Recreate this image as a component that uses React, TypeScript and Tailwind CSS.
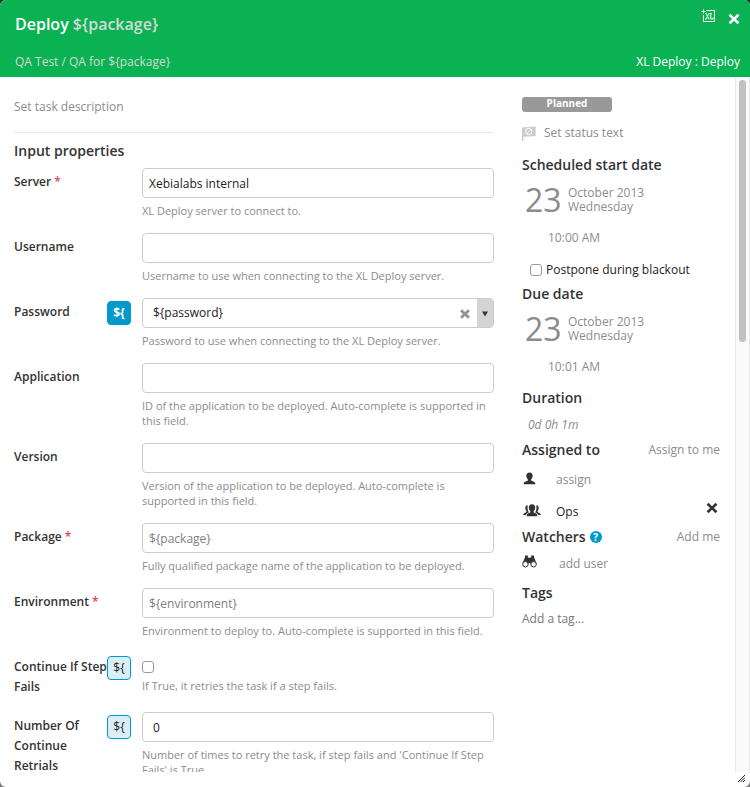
import type { ReactNode } from "react";

const heading = "text-[14px] leading-5 font-semibold text-[#333]";
const muted = "text-[12px] leading-5 text-[#8c8c8c]";
const box =
  "block h-[30px] w-full rounded border border-[#ccc] bg-white text-[12px] text-[#222] placeholder:text-[#808080] outline-none";

function Cross({ size, color, heavy }: { size: number; color: string; heavy?: boolean }) {
  return (
    <svg width={size} height={size} viewBox="0 0 12 12" className="block" aria-hidden="true">
      <path
        d="M2.500.8 6 4.200 9.500.8l1.900 1.900L7.900 6l3.500 3.300-1.900 1.900L6 7.800l-3.500 3.400L.6 9.300 4.100 6 .6 2.700z"
        fill={color}
        stroke={heavy ? color : "none"}
        strokeWidth="1"
      />
    </svg>
  );
}

function VariableToggle({ active, label }: { active?: boolean; label: string }) {
  return (
    <button
      type="button"
      aria-label={`Use variable for ${label}`}
      className={
        active
          ? "block h-6 w-6 rounded border border-[#0099cc] bg-[#0099cc] text-[12px] font-bold text-white"
          : "block h-6 w-6 rounded border border-[#0099cc] bg-[#d9eef7] text-[12px] font-medium text-[#222]"
      }
    >
      {"${"}
    </button>
  );
}

type FieldProps = {
  id: string;
  label: string;
  help: string;
  required?: boolean;
  toggle?: "on" | "off";
  children: ReactNode;
};

function Field({ id, label, help, required, toggle, children }: FieldProps) {
  return (
    <div className="mb-[15px] flex min-h-[44px]">
      <label htmlFor={id} className="w-[93px] shrink-0 pt-1 text-[12px] leading-5 font-semibold text-[#333]">
        {label}
        {required && <span className="text-[#d9434e]"> *</span>}
      </label>
      <div className="w-[35px] shrink-0 pt-[3px]">
        {toggle && <VariableToggle active={toggle === "on"} label={label} />}
      </div>
      <div className="min-w-0 flex-1">
        {children}
        <p className="mt-[5px] text-[11px] leading-[15px] text-[#8c8c8c]">{help}</p>
      </div>
    </div>
  );
}

function DateBlock({ time }: { time: string }) {
  return (
    <>
      <div className="mt-[9px] flex items-center pl-[3px] text-[#8c8c8c]">
        <span className="w-[43px] text-[32px] leading-8 font-medium">23</span>
        <span className="text-[12px] leading-[14px]">
          October 2013
          <br />
          Wednesday
        </span>
      </div>
      <p className={`mt-3 pl-[26px] ${muted}`}>{time}</p>
    </>
  );
}

function FlagIcon() {
  return (
    <svg width="14" height="15" viewBox="0 0 14 15" aria-hidden="true">
      <path d="M0 1.500 6 1l7.600-.6V10L7 10.400l-5.600.3V15H0z" fill="#ccc" />
      <circle cx="6.800" cy="5.500" r="3.200" fill="none" stroke="#fff" strokeWidth="1" />
      <path d="m4.600 7.700 4.400-4.400" stroke="#fff" strokeWidth="1" />
    </svg>
  );
}

function UserIcon() {
  return (
    <svg width="13" height="13" viewBox="0 0 13 13" aria-hidden="true">
      <path
        d="M6.500.4c2.100 0 3.200 1.300 3.200 3.200 0 1.500-.6 2.800-1.500 3.600v1.300c.5.9 4.100 1.100 4.100 2.700v1.100H.7v-1.100c0-1.600 3.600-1.800 4.100-2.700V7.200C3.900 6.400 3.300 5.100 3.300 3.600 3.300 1.700 4.400.4 6.500.4z"
        fill="#333"
      />
    </svg>
  );
}

function GroupIcon() {
  return (
    <svg width="18" height="13" viewBox="0 0 18 13" aria-hidden="true">
      <path
        d="M9 .2c2.100 0 3.200 1.300 3.200 3.200 0 1.500-.6 2.800-1.500 3.600v1.300c.5.9 3.500 1.100 3.500 2.700v1.300H3.800V11c0-1.600 3-1.800 3.500-2.700V7C6.400 6.200 5.800 4.900 5.800 3.400 5.800 1.500 6.900.2 9 .2z"
        fill="#333"
      />
      <path
        d="M4.900 1.300C3.200 1.100 2.300 2.300 2.300 4c0 1.200.4 2.300 1.100 3v1C3 8.800.3 8.900.3 10.300v.8h2.600c.2-1.500 1.700-2 2.700-2.500V7.800C4.600 6.600 4.100 3 4.900 1.300zM13.100 1.300c1.700-.2 2.600 1 2.600 2.700 0 1.200-.4 2.300-1.100 3v1c.4.8 3.100.9 3.100 2.300v.8h-2.600c-.2-1.500-1.700-2-2.700-2.500v-.8c1-1.200 1.500-4.800.7-6.500z"
        fill="#333"
      />
    </svg>
  );
}

function BinocularsIcon() {
  return (
    <svg width="15" height="13" viewBox="0 0 15 13" aria-hidden="true">
      <path
        d="M3 .6h2.800v1.300l.8.9h1.800l.8-.9V.6H12v1.600l2.200 5.300.5 2H8.800L8.300 8H6.700l-.5 1.500H.3l.5-2L3 2.200z"
        fill="#333"
      />
      <circle cx="3.400" cy="9.300" r="2.700" fill="#fff" stroke="#333" />
      <circle cx="11.600" cy="9.300" r="2.700" fill="#fff" stroke="#333" />
    </svg>
  );
}

export default function App() {
  return (
    <div className="h-screen bg-linear-to-b from-[#2b3035] to-[#777] font-['Open_Sans','Noto_Sans',sans-serif]">
      <div className="flex h-full flex-col overflow-hidden rounded-md bg-white">
        <header className="flex h-[77px] shrink-0 flex-col justify-between bg-[#0ab254] pr-2.5 pb-1.5 pl-[15px]">
          <div className="flex items-start justify-between">
            <h1 className="pt-3 text-[16px] leading-6 font-semibold text-white">
              Deploy <span className="text-[#d4d9d5]">{"${package}"}</span>
            </h1>
            <div className="flex gap-3 pt-2">
              <button type="button" aria-label="Open in XL Deploy" className="h-4">
                <svg width="15" height="15" viewBox="0 0 15 15" className="block" aria-hidden="true">
                  <path d="M5.500 1.500h8v11h-11V6" fill="none" stroke="#fff" />
                  <path d="M.5 2.500h4M2.500.5v4" stroke="#fff" />
                  <path
                    d="m5 4.500 3 5.500M8 4.500 5 10M4 4.500h1.500M7.500 4.500h1M4 10h1.500M7.500 10h1M9.800 4.500V10H12V8.500M9 4.500h1.700"
                    fill="none"
                    stroke="#fff"
                  />
                </svg>
              </button>
              <button type="button" aria-label="Close" className="mt-[5px] h-3">
                <Cross size={12} color="#fff" />
              </button>
            </div>
          </div>
          <div className="flex justify-between text-[12px] leading-[18px] font-medium">
            <span className="text-[#d4d9d5]">{"QA Test / QA for ${package}"}</span>
            <span className="text-white">XL Deploy : Deploy</span>
          </div>
        </header>

        <div className="flex min-h-0 flex-1 overflow-hidden">
          <main className="min-w-0 flex-1 pt-5 pl-3.5">
            <p className={`${muted} border-b border-[#e8e8e8] pb-[15px]`}>Set task description</p>
            <h2 className={`mt-2 mb-[7px] ${heading}`}>Input properties</h2>

            <Field id="server" label="Server" required help="XL Deploy server to connect to.">
              <input id="server" className={`${box} px-1.5`} defaultValue="Xebialabs internal" />
            </Field>
            <Field id="username" label="Username" help="Username to use when connecting to the XL Deploy server.">
              <input id="username" className={`${box} px-1.5`} />
            </Field>
            <Field
              id="password"
              label="Password"
              toggle="on"
              help="Password to use when connecting to the XL Deploy server."
            >
              <div className="flex h-[30px] items-stretch overflow-hidden rounded border border-[#ccc]">
                <select id="password" className="min-w-0 flex-1 appearance-none pl-2.5 text-[12px] text-[#222] outline-none">
                  <option>{"${password}"}</option>
                </select>
                <button type="button" aria-label="Clear password" className="flex items-center px-[7px] pt-0.5">
                  <Cross size={10} color="#929292" heavy />
                </button>
                <span className="flex w-4 items-center justify-center bg-[#d4d4d4] pt-0.5">
                  <svg width="6" height="6" viewBox="0 0 6 6" aria-hidden="true">
                    <path d="M0 .5h6L3 5.500z" fill="#333" />
                  </svg>
                </span>
              </div>
            </Field>
            <Field
              id="application"
              label="Application"
              help="ID of the application to be deployed. Auto-complete is supported in this field."
            >
              <input id="application" className={`${box} px-1.5`} />
            </Field>
            <Field
              id="version"
              label="Version"
              help="Version of the application to be deployed. Auto-complete is supported in this field."
            >
              <input id="version" className={`${box} px-1.5`} />
            </Field>
            <Field
              id="package"
              label="Package"
              required
              help="Fully qualified package name of the application to be deployed."
            >
              <input id="package" className={`${box} px-1.5`} placeholder={"${package}"} />
            </Field>
            <Field
              id="environment"
              label="Environment"
              required
              help="Environment to deploy to. Auto-complete is supported in this field."
            >
              <input id="environment" className={`${box} px-1.5`} placeholder={"${environment}"} />
            </Field>
            <Field
              id="continue"
              label="Continue If Step Fails"
              toggle="off"
              help="If True, it retries the task if a step fails."
            >
              <div className="flex h-5 items-end">
                <input
                  id="continue"
                  type="checkbox"
                  className="h-3 w-3 appearance-none rounded-[3px] border border-[#999] bg-white"
                />
              </div>
            </Field>
            <Field
              id="retrials"
              label="Number Of Continue Retrials"
              toggle="off"
              help="Number of times to retry the task, if step fails and 'Continue If Step Fails' is True."
            >
              <input id="retrials" className={`${box} px-2.5`} defaultValue="0" />
            </Field>
          </main>

          <aside className="mr-[15px] ml-7 w-[198px] shrink-0 pt-5">
            <div className="h-[15px] w-[90px] rounded-[3px] bg-[#999] text-center text-[10px] leading-[13px] font-bold text-white">
              Planned
            </div>
            <div className="mt-[11px] flex items-center gap-2">
              <FlagIcon />
              <span className={muted}>Set status text</span>
            </div>

            <h2 className={`mt-3 ${heading}`}>Scheduled start date</h2>
            <DateBlock time="10:00 AM" />
            <label className="mt-3 flex items-center gap-1 pl-2 text-[12px] leading-5 text-[#222]">
              <input type="checkbox" className="h-3 w-3 appearance-none rounded-[3px] border border-[#999] bg-white" />
              Postpone during blackout
            </label>

            <h2 className={`mt-1 ${heading}`}>Due date</h2>
            <DateBlock time="10:01 AM" />

            <h2 className={`mt-[11px] ${heading}`}>Duration</h2>
            <p className={`mt-[7px] pl-1.5 italic ${muted}`}>0d 0h 1m</p>

            <div className="mt-[5px] flex items-center justify-between">
              <h2 className={heading}>Assigned to</h2>
              <button type="button" className={muted}>
                Assign to me
              </button>
            </div>
            <div className="mt-2.5 flex items-center">
              <span className="w-[34px] pb-1 pl-px">
                <UserIcon />
              </span>
              <button type="button" className={muted}>
                assign
              </button>
            </div>
            <div className="mt-3 flex items-center">
              <span className="w-[34px] pb-1 pl-px">
                <GroupIcon />
              </span>
              <span className="flex-1 text-[12px] leading-5 text-[#222]">Ops</span>
              <button type="button" aria-label="Remove Ops" className="mr-0.5 mb-2">
                <Cross size={12} color="#333" />
              </button>
            </div>

            <div className="mt-[5px] flex items-center justify-between">
              <h2 className={`flex items-center gap-1 ${heading}`}>
                Watchers
                <span className="h-3 w-3 rounded-full bg-[#0099cc] text-center text-[10px] leading-3 font-bold text-white">
                  ?
                </span>
              </h2>
              <button type="button" className={muted}>
                Add me
              </button>
            </div>
            <div className="mt-[7px] flex items-center">
              <span className="w-[37px] pb-1.5">
                <BinocularsIcon />
              </span>
              <button type="button" className={muted}>
                add user
              </button>
            </div>

            <h2 className={`mt-[9px] ${heading}`}>Tags</h2>
            <p className="mt-1.5 text-[12px] leading-5 text-[#777]">Add a tag...</p>
          </aside>

          <div className="w-[15px] shrink-0 border-x border-[#e8e8e8] bg-[#fafafa] px-[3px] pt-[3px]">
            <div className="h-[262px] w-full rounded-full bg-[#c1c1c1]" />
          </div>
        </div>

        <footer className="flex h-[15px] shrink-0 justify-end pt-[3px] pr-[5px]">
          <svg width="7" height="7" viewBox="0 0 7 7" aria-hidden="true">
            <path d="M0 7 7 0M2.500 7 7 2.500M5 7l2-2" stroke="#222" />
          </svg>
        </footer>
      </div>
    </div>
  );
}
